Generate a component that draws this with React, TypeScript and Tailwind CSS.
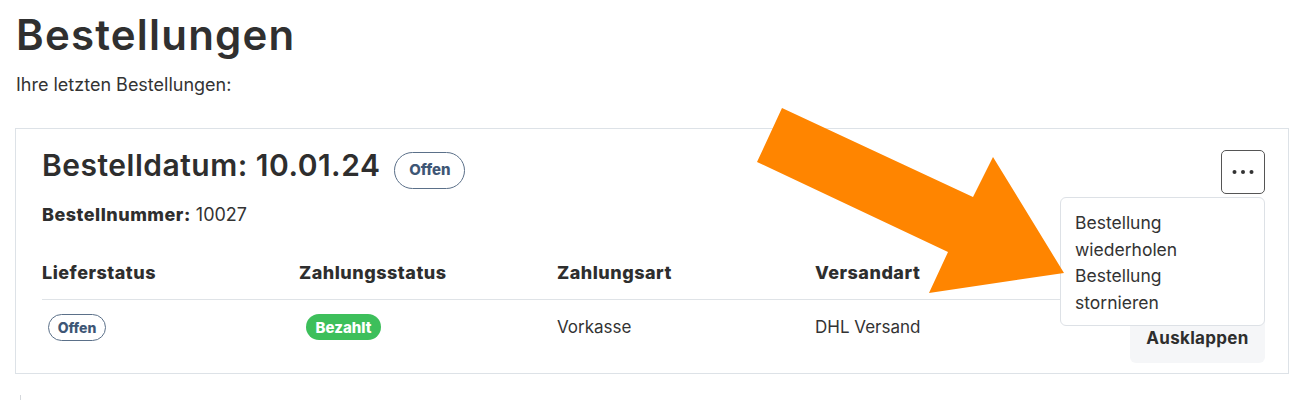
import React from "react";

function Dots() {
  return (
    <svg width="22" height="6" viewBox="0 0 22 6" aria-hidden="true">
      <circle cx="2.5" cy="3" r="2" fill="#333" />
      <circle cx="11" cy="3" r="2" fill="#333" />
      <circle cx="19.5" cy="3" r="2" fill="#333" />
    </svg>
  );
}

export default function App() {
  return (
    <div className="relative h-[400px] w-[1300px] overflow-hidden bg-white font-['Inter',sans-serif] text-[#333]">
      <div className="pl-4 pr-[11px] pt-[10px]">
        <h1 className="text-[42px] font-semibold leading-[50px] tracking-[1.2px] text-[#303030]">Bestellungen</h1>
        <p className="mt-[13px] text-[18px] leading-6 text-[#333]">Ihre letzten Bestellungen:</p>

        <div className="ml-[-1px] mt-[31px] border border-[#dde2e7] pb-[10px] pl-[26px] pr-[23px] pt-[21px]">
          <div className="flex items-start justify-between">
            <div className="flex items-start gap-[14px]">
              <h2 className="mt-[-3px] text-[30px] font-semibold leading-[36px] tracking-[0.5px] text-[#2e2e2e]">Bestelldatum: 10.01.24</h2>
              <span className="mt-[2px] flex h-[37px] w-[71px] items-center justify-center rounded-full border border-[#5b7089] text-[15px] font-extrabold text-[#3e5675]">
                Offen
              </span>
            </div>
            <div className="relative">
              <button className="flex h-[44px] w-[44px] items-center justify-center rounded-[5px] border border-[#555] bg-white">
                <Dots />
              </button>
              <div className="absolute right-0 top-[47px] z-10 w-[205px] rounded-md border border-[#dde1e6] bg-white pb-[9px] pl-[14px] pr-[10px] pt-[12px] text-[17.5px] leading-[26.5px] text-[#333]">
                <div>
                  <span className="block">Bestellung</span>
                  <span className="block">wiederholen</span>
                </div>
                <div>
                  <span className="block">Bestellung</span>
                  <span className="block">stornieren</span>
                </div>
              </div>
            </div>
          </div>

          <p className="mt-[9px] text-[18px] leading-6">
            <span className="font-extrabold tracking-[0.5px] text-[#2e2e2e]">Bestellnummer:</span> 10027
          </p>

          <div className="mt-[34px] grid grid-cols-[257px_258px_258px_1fr_135px] border-b border-[#dfe3e7] pb-[14px] text-[18px] font-extrabold leading-6 tracking-[0.5px] text-[#2e2e2e]">
            <div>Lieferstatus</div>
            <div>Zahlungsstatus</div>
            <div>Zahlungsart</div>
            <div>Versandart</div>
            <div></div>
          </div>

          <div className="grid grid-cols-[257px_258px_258px_1fr_135px] items-start pt-[13px] text-[17px] leading-[27px] text-[#333]">
            <div className="pl-[6px] pt-[1px]">
              <span className="flex h-[27px] w-[58px] items-center justify-center rounded-full border border-[#5b7089] text-[14px] font-extrabold text-[#3e5675]">
                Offen
              </span>
            </div>
            <div className="pl-[7px] pt-[1px]">
              <span className="flex h-[26px] w-[75px] items-center justify-center rounded-full bg-[#3dbf5b] text-[15px] font-extrabold text-white">
                Bezahlt
              </span>
            </div>
            <div className="pt-[1px]">Vorkasse</div>
            <div className="pt-[1px]">DHL Versand</div>
            <button className="flex h-[50px] w-[135px] items-center justify-center rounded-md bg-[#f5f6f8] text-[17px] font-bold tracking-[0.3px] text-[#2e2e2e]">
              Ausklappen
            </button>
          </div>
        </div>

        <div className="ml-[4px] mt-[21px] h-[10px] border-l border-[#d5d8dc]"></div>
      </div>

      <svg className="pointer-events-none absolute left-0 top-0 z-20" width="1300" height="400" viewBox="0 0 1300 400" aria-hidden="true">
        <polygon points="782,108 973,197 993,157 1064,273 929,293 948,252 757,162" fill="#ff8500" />
      </svg>
    </div>
  );
}
